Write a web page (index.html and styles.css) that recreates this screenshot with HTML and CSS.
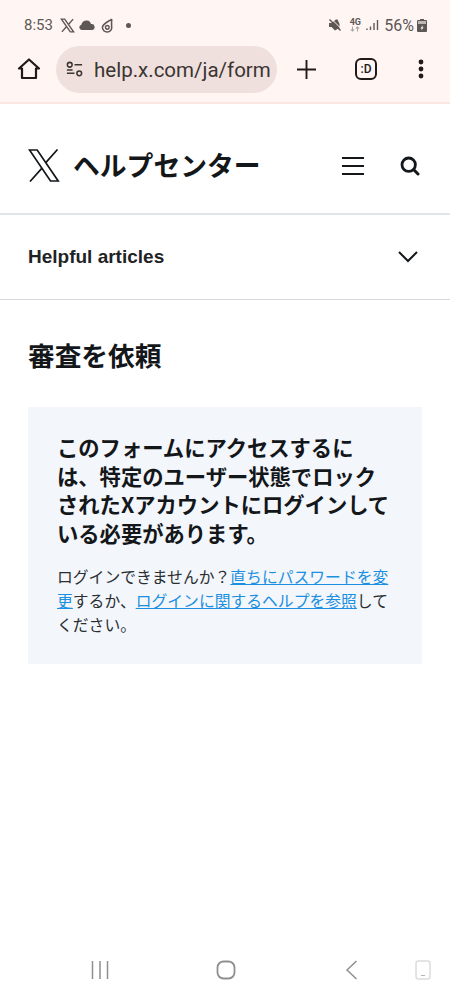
FILE: index.html
```html
<!DOCTYPE html>
<html lang="ja">
<head>
<meta charset="utf-8">
<title>審査を依頼</title>
<link rel="stylesheet" href="styles.css">
</head>
<body>
<div class="screen">
  <div class="chrome">
    <div class="status">
      <div class="status-left">
        <span class="time">8:53</span>
        <svg class="st-x" viewBox="0 0 16 16"><path fill="none" stroke="#5d5755" stroke-width="1.500" d="M1.500 1.200h3.500l9.500 13.600h-3.500zM14 1.200 9 7M2 14.800l5-5.800"/></svg>
        <svg class="st-cloud" viewBox="0 0 16 10"><path fill="#5d5755" d="M2.800 10a2.700 2.700 0 0 1-.5-5.300A5 5 0 0 1 8 .5a4.500 4.500 0 0 1 4 3.600A3 3 0 0 1 13.200 10z"/></svg>
        <svg class="st-swirl" viewBox="0 0 14 16"><path fill="none" stroke="#5d5755" stroke-width="1.700" d="M11.500 1C9 3.500 2 5.500 1.500 10a5 5 0 0 0 5.300 5c3 0 5-2.500 4.700-5-.2-2-.2-3.500 0-9"/><circle cx="6.800" cy="10" r="2" fill="none" stroke="#5d5755" stroke-width="1.500"/></svg>
        <span class="dot"></span>
      </div>
      <div class="status-right">
        <svg class="st-mute" viewBox="0 0 14 14"><path fill="#5d5755" d="M1 5h2.500l4.500-3.500h1.500l2 4.500V11H9.500L7 12.500 3.500 9H1z"/><path stroke="#fff6f4" stroke-width="1" d="M3 .5l10.500 10.500"/><path stroke="#5d5755" stroke-width="1.400" d="M1.500 1.500l11 11"/></svg>
        <span class="net">4G<svg class="st-arrows" viewBox="0 0 12 6"><path stroke="#a9a5a3" stroke-width="1.300" fill="none" d="M3 0v5.500M1 3.500l2 2 2-2M9 6V.5M7 2.500l2-2 2 2"/></svg></span>
        <svg class="st-signal" viewBox="0 0 13 12"><path stroke="#5d5755" stroke-width="1.400" d="M1 11V9.500M4.500 11V7.500M8 11V4M11.500 11V1"/></svg>
        <span class="pct">56%</span>
        <svg class="st-batt" viewBox="0 0 10 13"><path fill="#5d5755" d="M3 0h4v1h2a1 1 0 0 1 1 1v10a1 1 0 0 1-1 1H1a1 1 0 0 1-1-1V2a1 1 0 0 1 1-1h2z"/><path fill="#bdb8b6" d="M1 2h8v3H1z"/><path fill="#fff" d="M5.800 6 3.500 9.500h1.300L4.300 11.500 6.600 8.200H5.300z"/></svg>
      </div>
    </div>
    <div class="toolbar">
      <svg class="tb-home" viewBox="0 0 24 24"><path fill="none" stroke="#201a19" stroke-width="2.200" stroke-linejoin="round" d="M12 2.500 2 11.500h3V21h14v-9.500h3z"/></svg>
      <div class="omnibox">
        <svg class="tune" viewBox="0 0 20 20"><g fill="none" stroke="#3b3533" stroke-width="1.600"><circle cx="5" cy="5" r="2.500"/><path d="M2 10.500h6M10 5h8M10 14h-8"/><circle cx="15" cy="14" r="2.500"/></g></svg>
        <span class="url">help.x.com/ja/form</span>
      </div>
      <svg class="tb-plus" viewBox="0 0 20 20"><path stroke="#201a19" stroke-width="2" d="M10 0v20M0 10h20"/></svg>
      <div class="tab-count">:D</div>
      <svg class="tb-menu" viewBox="0 0 6 20"><circle cx="3" cy="3" r="2.400" fill="#201a19"/><circle cx="3" cy="10" r="2.400" fill="#201a19"/><circle cx="3" cy="17" r="2.400" fill="#201a19"/></svg>
    </div>
  </div>

  <header class="site-header">
    <svg class="logo" viewBox="0 0 32 33"><path fill="none" stroke="#14171a" stroke-width="1.700" d="M1.500 1h7.700l21 31h-7.700z"/><path fill="none" stroke="#14171a" stroke-width="1.700" d="M29.500 .5 17.800 13.600M2 32.500l12.200-13.600"/></svg>
    <span class="brand">ヘルプセンター</span>
    <svg class="hamburger" viewBox="0 0 22 18"><path stroke="#14171a" stroke-width="2" d="M0 1h22M0 9h22M0 17h22"/></svg>
    <svg class="search" viewBox="0 0 20 20"><circle cx="8.700" cy="8.700" r="6.700" fill="none" stroke="#14171a" stroke-width="2.800"/><path stroke="#14171a" stroke-width="3" stroke-linecap="round" d="M13.800 13.800 18 18"/></svg>
  </header>

  <div class="articles">
    <span class="articles-label">Helpful articles</span>
    <svg class="chevron" viewBox="0 0 20 12"><path fill="none" stroke="#14171a" stroke-width="2" d="M1 1l9 9 9-9"/></svg>
  </div>

  <main class="content">
    <h1 class="title">審査を依頼</h1>
    <section class="notice">
      <h2 class="notice-title">このフォームにアクセスするには、特定のユーザー状態でロックされたXアカウントにログインしている必要があります。</h2>
      <p class="notice-text">ログインできませんか？<a href="#">直ちにパスワードを変更</a>するか、<a href="#">ログインに関するヘルプを参照</a>してください。</p>
    </section>
  </main>

  <nav class="navbar">
    <svg class="nav-recent" viewBox="0 0 18 18"><path stroke="#8f8f8f" stroke-width="1.500" d="M1.500 0v18M9 0v18M16.500 0v18"/></svg>
    <svg class="nav-home" viewBox="0 0 20 20"><rect x="1.500" y="1.500" width="17" height="17" rx="6" fill="none" stroke="#8f8f8f" stroke-width="1.800"/></svg>
    <svg class="nav-back" viewBox="0 0 12 20"><path fill="none" stroke="#8f8f8f" stroke-width="1.500" d="M11 1 1.500 10l9.500 9"/></svg>
    <svg class="nav-phone" viewBox="0 0 16 20"><rect x="1" y="1" width="14" height="18" rx="2.500" fill="none" stroke="#dcdcdc" stroke-width="1.500"/><path stroke="#b5b5b5" stroke-width="1" d="M6 15.500h4"/></svg>
  </nav>
</div>
</body>
</html>
```
FILE: styles.css
```css
* { box-sizing: border-box; }
html, body { margin: 0; padding: 0; background: #fff; }
body { font-family: "Liberation Sans", "Noto Sans CJK JP", sans-serif; color: #14171a; }
svg { display: block; flex: none; }
.screen { width: 450px; height: 999px; display: flex; flex-direction: column; overflow: hidden; }

.chrome { height: 104px; background: #fff6f4; border-bottom: 2px solid #fbe6e2; flex: none; }
.status { height: 44px; padding: 6px 23px 0 24px; display: flex; justify-content: space-between; align-items: center; font-family: Roboto, sans-serif; color: #5d5755; }
.status-left, .status-right { display: flex; align-items: center; }
.time { font-size: 15px; margin-right: 7px; }
.st-x { width: 15px; height: 15px; margin-right: 4px; }
.st-cloud { width: 16px; height: 10px; margin-right: 6px; }
.st-swirl { width: 13px; height: 15px; margin-right: 12px; }
.dot { width: 5px; height: 5px; border-radius: 50%; background: #5d5755; }
.st-mute { width: 14px; height: 14px; margin-right: 7px; }
.net { font-size: 9px; font-weight: 700; line-height: 8px; width: 12px; margin-right: 5px; display: flex; flex-direction: column; align-items: center; }
.st-arrows { width: 10px; height: 6px; }
.st-signal { width: 13px; height: 12px; margin-right: 5px; }
.pct { font-size: 16px; margin-right: 3px; }
.st-batt { width: 10px; height: 13px; }

.toolbar { height: 58px; padding: 0 0 8px 17px; display: flex; align-items: center; }
.tb-home { width: 24px; height: 24px; margin-right: 15px; }
.omnibox { width: 221px; height: 47px; border-radius: 24px; background: #efe0dd; display: flex; align-items: center; padding-left: 9px; overflow: hidden; margin-right: 20px; }
.tune { width: 19px; height: 19px; margin-right: 10px; }
.url { font-family: Roboto, sans-serif; font-size: 20.500px; color: #3b3533; white-space: nowrap; padding-top: 1px; }
.tb-plus { width: 19px; height: 19px; margin-right: 39px; }
.tab-count { width: 22px; height: 22px; border: 2.500px solid #201a19; border-radius: 6px; font-family: Roboto, sans-serif; font-size: 12px; font-weight: 500; color: #201a19; display: flex; align-items: center; justify-content: center; margin-right: 41px; }
.tb-menu { width: 6px; height: 20px; }

.site-header { height: 111px; padding: 14px 30px 0 28px; display: flex; align-items: center; border-bottom: 2px solid #e1e4e8; flex: none; }
.logo { width: 32px; height: 33px; margin-right: 13px; }
.brand { font-family: "Noto Sans CJK JP", sans-serif; font-weight: 700; font-size: 26.800px; line-height: 33px; flex: 1; white-space: nowrap; padding-bottom: 3px; }
.hamburger { width: 22px; height: 18px; margin-right: 36px; }
.search { width: 20px; height: 20px; }

.articles { height: 85px; padding: 0 32px 0 28px; display: flex; justify-content: space-between; align-items: center; border-bottom: 1.500px solid #d5d9de; flex: none; }
.articles-label { font-size: 19px; font-weight: 700; color: #1f2326; }
.chevron { width: 20px; height: 12px; }

.content { flex: 1; padding: 37px 28px 0; }
.title { margin: 0 0 34px; font-family: "Noto Sans CJK JP", sans-serif; font-size: 26.700px; line-height: 36px; font-weight: 700; }
.notice { background: #f3f6fa; padding: 26px 29px 27px; }
.notice-title { margin: 0 0 18px; font-family: "Noto Sans CJK JP", sans-serif; font-size: 21.300px; line-height: 28.500px; font-weight: 700; }
.notice-text { margin: 0; font-family: "Noto Sans CJK JP", sans-serif; font-size: 15.800px; line-height: 24px; color: #292f33; }
.notice-text a { color: #1b8fe0; text-decoration: underline; }

.navbar { height: 58px; flex: none; display: flex; align-items: center; padding: 0 0 0 91px; }
.nav-recent { width: 18px; height: 18px; margin-right: 107px; }
.nav-home { width: 20px; height: 20px; margin-right: 109px; }
.nav-back { width: 13px; height: 20px; margin-right: 57px; }
.nav-phone { width: 16px; height: 20px; }
```
